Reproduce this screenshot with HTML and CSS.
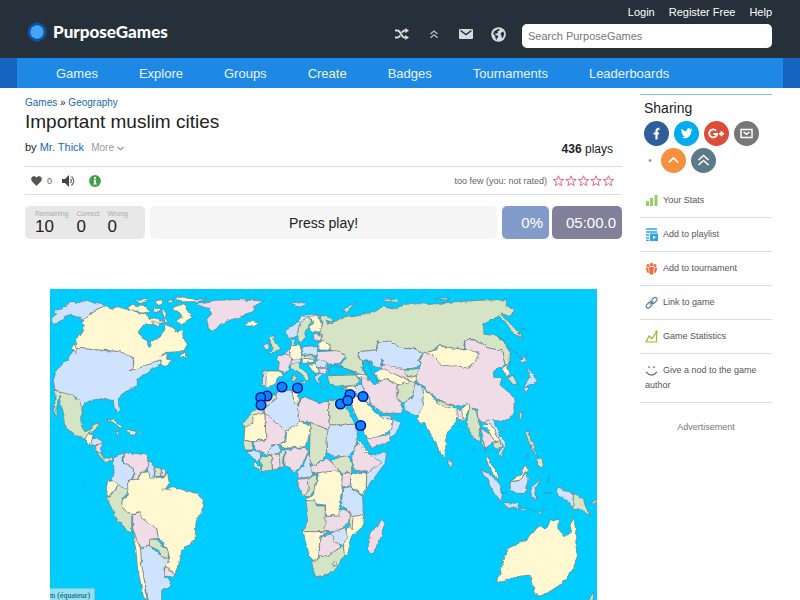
FILE: index.html
```html
<!DOCTYPE html>
<html lang="en">
<head>
<meta charset="utf-8">
<title>Important muslim cities - PurposeGames</title>
<link rel="stylesheet" href="styles.css">
</head>
<body>
<header class="top">
  <a class="logo" href="#"><svg width="20" height="20" viewBox="0 0 20 20" aria-hidden="true"><circle cx="10" cy="10" r="9.5" fill="#0d52a0"/><circle cx="10" cy="10" r="6.7" fill="#42a5f5"/></svg><span>PurposeGames</span></a>
  <nav class="tools">
    <a href="#" aria-label="Random game"><svg width="14" height="12" viewBox="0 0 14 12"><path d="M0 2.5h2.5C6 2.5 6 9.5 9.5 9.5H11M0 9.5h2.5c1.300 0 2-.9 2.600-2M7 4.600c.6-1.200 1.300-2.100 2.500-2.100H11" fill="none" stroke="#d8dadd" stroke-width="1.900"/><path d="M10.300 0 14 2.500 10.300 5.200zM10.300 6.900 14 9.500 10.300 12z" fill="#d8dadd"/></svg></a>
    <a href="#" aria-label="Boost"><svg width="10" height="10" viewBox="0 0 10 10"><path d="m1.500 5 3.500-3 3.500 3M1.500 8.800 5 5.800l3.500 3" fill="none" stroke="#b9bec3" stroke-width="1.300"/></svg></a>
    <a href="#" aria-label="Messages"><svg width="14" height="10" viewBox="0 0 14 10"><rect width="14" height="10" rx="1" fill="#d8dadd"/><path d="m1.500 1.500 5.500 4 5.500-4" fill="none" stroke="#25303b" stroke-width="1.500"/></svg></a>
    <a href="#" aria-label="Language"><svg width="15" height="15" viewBox="0 0 15 15"><circle cx="7.500" cy="7.500" r="7.300" fill="#d8dadd"/><path d="M6.500 2.200 8.800 2l-.6 1.500-1.700 1.100.5 1.200-2 .9L3.800 6.500l.7 1.500 2.200.5.7 1.500-1.400 1.200-.4 1.800-1.100-1.800-.3-1.900L2.200 6.800l.8-2.300zM10.700 5.200l1.700-.6.8 2.600-1.200 3.400-1.300.3-.2-2.200-1.200-1.700z" fill="#25303b"/></svg></a>
  </nav>
  <div class="account">
    <nav class="userlinks"><a href="#">Login</a><a href="#">Register Free</a><a href="#">Help</a></nav>
    <input class="search" type="text" placeholder="Search PurposeGames" aria-label="Search PurposeGames">
  </div>
</header>
<div class="navbar">
  <nav class="mainnav"><a href="#">Games</a><a href="#">Explore</a><a href="#">Groups</a><a class="create" href="#">Create</a><a href="#">Badges</a><a href="#">Tournaments</a><a href="#">Leaderboards</a></nav>
</div>
<div class="page">
<main class="game">
  <nav class="crumbs"><a href="#">Games</a> » <a href="#">Geography</a></nav>
  <h1>Important muslim cities</h1>
  <div class="byline">
    <div>by <a href="#">Mr. Thick</a> <button class="more" type="button">More <svg width="7" height="5" viewBox="0 0 7 5"><path d="m.5 1 3 2.800 3-2.800" fill="none" stroke="#999" stroke-width="1.200"/></svg></button></div>
    <div class="plays"><b>436</b> plays</div>
  </div>
  <div class="toolbar">
    <button type="button" aria-label="Favourite"><svg width="11" height="10" viewBox="0 0 11 10"><path d="M5.500 10 .9 5.300C-.5 3.500.2.500 2.700.300 4 .200 5 .900 5.500 1.700 6 .900 7 .200 8.300.300c2.500.2 3.200 3.200 1.800 5z" fill="#555"/></svg></button><span class="favs">0</span>
    <button class="sound" type="button" aria-label="Sound"><svg width="13" height="12" viewBox="0 0 13 12"><path d="M0 4h3l4-4v12L3 8H0z" fill="#444"/><path d="M8.500 3.800q1.600 2.200 0 4.400M9.500 1.500q4.500 4.500 0 9" fill="none" stroke="#666" stroke-width="1.200"/></svg></button>
    <button class="info" type="button" aria-label="Information"><svg width="12" height="12" viewBox="0 0 12 12"><circle cx="6" cy="6" r="5.900" fill="#43a047"/><path d="M5 2h2v1.800H5zM4.500 4.800H7v3.700h.7v1H4.400v-1h.8V5.800h-.7z" fill="#fff"/></svg></button>
    <span class="rating">too few (you: not rated)</span>
    <svg class="stars" width="62" height="12" viewBox="0 0 62 12" role="img" aria-label="Not rated"><defs><path id="star" d="m5.500.8 1.400 3.500 3.800.2-3 2.400 1 3.700-3.200-2-3.200 2 1-3.700-3-2.400 3.800-.2z" fill="none" stroke="#e8596b" stroke-width=".9"/></defs><use href="#star"/><use href="#star" x="12.500"/><use href="#star" x="25"/><use href="#star" x="37.500"/><use href="#star" x="50"/></svg>
  </div>
  <div class="scorebar">
    <dl class="counts"><div><dt>Remaining</dt><dd>10</dd></div><div><dt>Correct</dt><dd>0</dd></div><div><dt>Wrong</dt><dd>0</dd></div></dl>
    <button class="prompt" type="button">Press play!</button>
    <div class="results"><div class="percent">0%</div><div class="timer">05:00.0</div></div>
  </div>
  <svg class="map" viewBox="0 0 547 311" role="img" aria-label="World map">
    <defs><filter id="coast" x="0" y="0" width="100%" height="100%" color-interpolation-filters="sRGB"><feTurbulence type="fractalNoise" baseFrequency=".16" numOctaves="2" seed="4"/><feDisplacementMap in="SourceGraphic" scale="4" xChannelSelector="R" yChannelSelector="G"/></filter></defs>
    <rect width="547" height="311" fill="#0cf"/>
    <g filter="url(#coast)">
    <rect width="547" height="311" fill="#0cf"/>
    <g class="land" transform="translate(0 -4) scale(.33333)">
      <path class="b" d="M5 112V100L20 87 10 82 18 75 35 72 50 65 45 58 65 50 85 53 110 46 135 55 162 60 98 105 85 98 60 90 45 95 50 100 30 108 12 115Z"/>
      <path class="y" d="M162 60 185 70 205 65 235 75 265 82 290 90 300 105 320 100 345 110 335 75 350 82 345 100 355 112 330 112 320 118 280 120 265 140 270 155 292 168 295 188 302 185 305 168 325 160 340 140 345 122 370 122 375 140 395 135 400 155 412 178 405 195 385 200 350 202 335 210 330 215 345 208 355 210 352 222 370 228 350 240 335 240 330 225 305 235 270 248 240 257 252 235 250 222 240 215 210 200 80 190 75 180 82 160 100 135 103 120 95 112 98 105Z"/>
      <path class="b" d="M80 190 210 200 240 213 250 222V245L240 257 270 248 305 235 328 225 332 238 310 250 295 262 275 272 262 285V300L245 310 215 328 205 345 208 375 200 383 193 370 190 347 160 340 120 347 105 355 98 375 88 350 75 335 45 330 35 320 15 315 10 285 20 255 60 215 72 195Z"/>
      <path class="g" d="M15 315 35 322 72 332 78 345 88 345 100 375 92 400 95 425 105 440 122 435 128 420 148 415 140 435 118 443 105 462 75 452 50 430 38 405 42 390 30 350 28 328 24 345 20 370 22 398 14 385 15 345Z"/>
      <path class="y" d="M106 460 115 445H125L128 462 120 478 108 474Z"/><path class="b" d="M128 460 158 465 155 477 135 482 120 476Z"/><path class="p" d="M135 482 158 475 152 505 140 500Z"/><path class="g" d="M140 500 152 505 162 520 185 515 190 527 180 523 168 532 150 515Z"/>
      <path class="y" d="M232 68 245 60 262 65 270 60 295 63 292 72 300 80 280 84 262 78 245 78ZM252 45 280 42 292 48 275 53ZM315 48 335 44 340 54 325 58ZM350 48 368 44 362 54ZM370 40 400 36 425 42 470 42 440 50 400 50ZM368 68 395 58 410 68 415 82 430 98 408 108 395 120 378 106 398 96 388 82 372 80ZM310 72 330 70 325 82 312 80ZM302 112 330 110 325 125ZM387 215 405 198 412 220ZM168 405 190 404 220 425 212 430 190 412ZM232 435 258 440 250 447 230 443ZM196 440H208L203 446ZM262 440H275L270 445ZM68 178 80 182 78 203 68 190Z"/>
      <path class="p" d="M440 55 500 46 570 44 640 48 610 65 615 75 570 97 540 105 515 115 490 138 475 130 470 105 485 90 480 70 455 65Z"/>
    </g>
    <g class="land" transform="translate(190 -4) scale(.33333)">
      <path class="y" d="M18 115 35 108 57 115 40 125 20 122Z"/>
      <path class="g" d="M90 155 103 152 102 165 118 190 112 200 88 204 100 190 92 178Z"/><path class="b" d="M70 180 85 175 88 190 72 195ZM155 55 180 50 200 58 180 66Z"/>
      <path class="g" d="M245 90 275 100 280 112 255 105 262 118 320 95 385 85 430 65 455 72 510 55 570 58 650 50 740 45 800 45 798 65 820 72 815 90 780 88 810 115 850 158 820 145 795 110 775 92 765 100 730 118 732 148 765 152 795 175 810 200V235L795 240 785 198 745 188 700 163 675 165 670 190 640 190 595 180 585 195 550 205 520 190H480L455 170H410V195L355 200V220L370 228 365 245 375 275 350 262 315 250 300 235 318 225V210L290 200 270 195V178L245 165 243 145 235 145 245 120ZM310 75 325 62 355 55 330 68 320 80ZM425 42 475 45 470 52 440 49ZM588 40 630 38 615 45Z"/>
      <path class="b" d="M137 135 165 118 185 95 215 88 245 92 235 100 200 97 180 115 170 155 150 160 138 150Z"/><path class="g" d="M180 112 200 97 215 105 205 125 195 140V155L180 172 170 155Z"/><path class="y" d="M210 95 235 90 245 125 240 140 215 142 210 125 218 110Z"/>
      <path class="p" d="M107 220 135 203 150 215 155 230 145 245 150 255 135 262 115 255 118 235Z"/><path class="y" d="M150 185 180 180 188 210 182 222H150L147 200Z"/><path class="b" d="M155 165 165 162 165 180 155 182ZM185 185 228 182 232 205 220 212 190 205ZM137 205 148 190 150 212Z"/>
      <path class="y" d="M68 258 120 258 130 270 112 282 108 295 85 308 70 303Z"/><path class="b" d="M68 262 80 265 77 302 67 300Z"/><path class="g" d="M148 235 180 230 178 245 205 268 210 280 200 285 180 265 155 250ZM178 288 198 288 195 297ZM158 272H166V288H158Z"/>
      <path class="p" d="M232 200 290 197 318 212 300 232 280 240 262 232 230 225ZM220 150 243 148 245 168 222 165Z"/><path class="y" d="M235 175 255 165 272 185 262 195H232ZM185 225 225 218 222 232 190 235ZM205 240 228 235 238 262 222 265Z"/><path class="g" d="M185 210 220 214 228 222 185 224Z"/><path class="b" d="M232 225 260 228 262 248H235L225 235ZM222 270 250 268 238 280 240 298 228 287ZM152 225 183 222 182 232 155 238Z"/><path class="p" d="M235 250H262L255 268H238Z"/>
      <path class="g" d="M262 273 300 270 345 268 358 285 350 300 300 305 270 300ZM305 312 322 307 318 314ZM240 306H260L255 310Z"/>
      <path class="y" d="M340 265 375 270 385 285 365 282ZM320 305 352 300 345 325 322 330Z"/>
      <path class="b" d="M355 200 410 195V172L455 168 480 190 520 192 550 205 535 225 545 240 500 250 470 265 430 235 425 250 400 240 392 228 370 228 355 220Z"/>
      <path class="p" d="M425 238 480 252 515 260 500 285 470 270 430 255Z"/><path class="y" d="M405 262 430 250 470 270 510 290 480 302 440 282 415 285Z"/><path class="g" d="M495 255 545 250 540 265 520 275 495 268Z"/><path class="y" d="M500 272 530 275 525 295 505 288Z"/>
      <path class="p" d="M365 275 380 285 415 295 430 282 475 298 470 330 490 375V385L430 385 400 365 380 330 365 300Z"/><path class="g" d="M475 300 515 288 530 300 520 330 495 352 470 345Z"/><path class="b" d="M497 375 490 355 520 335 528 300 545 300 550 345 540 400 520 390Z"/>
      <path class="b" d="M350 300 365 298 380 330 395 355 375 350 345 325Z"/><path class="y" d="M325 345 345 330 385 355 405 380 420 395 460 405 455 435 410 458 380 462 360 415 345 385Z"/><path class="b" d="M460 400 482 415 465 450 445 458 455 430ZM420 392 452 392 455 402 425 400Z"/><path class="p" d="M380 462 412 455 445 448 452 468 392 490Z"/>
      <path class="sea" d="M368 232 388 230 390 250 405 275 418 298 400 298 385 275 370 250ZM262 252 275 243 300 242 340 262 345 270 300 271 275 268ZM424 225 430 225 428 245 422 240Z"/>
      <path class="g" d="M55 365 75 345 90 330 108 330 105 345 72 372ZM10 415 45 372H72V390H40V415L15 430Z"/><path class="y" d="M15 425 38 418 40 390 75 385 78 462 35 470 12 465Z"/><path class="b" d="M72 372 105 345 110 320 158 315 160 340 175 370 180 412 140 440 75 390Z"/><path class="y" d="M158 305 175 310 172 335 180 345 170 360 158 335Z"/>
      <path class="p" d="M75 385 140 438 130 470 100 480 85 510 45 490 38 470 78 465Z"/><path class="y" d="M140 438 180 412 212 420 208 450 195 485 130 490 120 478 138 465Z"/><path class="p" d="M180 345 195 335 240 355 265 345 268 435 210 412H180L172 370Z"/><path class="g" d="M265 345 320 352 318 368 325 375 345 418 268 420ZM212 412 265 435 258 475 260 510 220 545 208 520 210 450Z"/><path class="b" d="M268 420 345 418 355 450 345 490 325 515H285L260 500 258 465Z"/>
      <path class="g" d="M588 352 605 345 640 365 635 375 600 365Z"/>
      <path class="p" d="M675 165 705 165 745 188 785 198 795 240 772 250 760 260 762 280 785 280 780 300 810 325 825 345V385L790 410 760 405 735 410 715 405 710 375 685 360 650 362 620 355 575 330 555 305 535 295 525 280 545 240 540 225 555 200 585 215 610 245 650 240 690 250 715 205 675 190Z"/>
      <path class="y" d="M555 203 590 195 595 182 640 190 670 192 695 195 715 208 705 230 685 250 650 242 610 245 585 215ZM545 305 570 325 590 350 640 370 660 375 685 355 690 365 670 410 650 395 648 410 620 445 618 475 615 520 600 505 585 465 560 430 555 410 540 415 530 400 545 370 550 340Z"/><path class="g" d="M590 345 640 362V372L595 358Z"/><path class="p" d="M648 378 665 375 670 410 655 400Z"/>
      <path class="y" d="M785 250 800 240 810 265 800 275Z"/><path class="g" d="M800 275 820 272 832 298 818 298ZM690 360 710 385 715 405 722 430 715 450 725 475 738 500 730 470 705 462 695 450 682 425V400Z"/><path class="b" d="M860 250 878 265 890 290 870 300 850 305 860 290 872 280ZM840 225 855 215 865 230 845 235ZM850 310 868 305 858 325Z"/>
      <path class="p" d="M722 430 745 445 768 465 750 480 735 490 730 465Z"/><path class="b" d="M735 408 760 402 765 420 780 450 798 480 780 515 775 505 788 485 772 450 750 420Z"/><path class="y" d="M730 420 750 415 775 455 782 475 765 470 750 445Z"/><path class="g" d="M758 475 782 470 785 485 770 497ZM838 385 845 380V400L840 405ZM858 440 868 440 870 470 885 480 880 490 862 468ZM783 430 792 428 790 440Z"/>
      <path class="line" d="M765 152 790 165 812 190 830 205M865 200 858 218M835 210 845 220M835 130 855 132"/>
    </g>
    <g class="land" transform="translate(0 151) scale(.33333)">
      <path class="b" d="M190 55 220 38 215 65 250 85V115L232 118 235 150 215 148 185 125 192 100Z"/><path class="p" d="M220 40 240 38 290 45 297 60 290 90 268 98 265 120 252 120 250 85 222 70Z"/><path class="b" d="M297 60 315 85 312 110 318 118 300 115 292 90Z"/><path class="g" d="M315 82 335 85 332 108 315 110Z"/><path class="p" d="M335 85 348 95 340 110 333 108Z"/>
      <path class="y" d="M232 120 268 118 270 98 292 92 302 115 345 110 352 95 358 130 345 148 370 140 400 150 440 160 460 180 455 215 438 245 435 300 395 330 390 365 375 400 345 382 358 350 350 325 325 295 320 265 270 235 265 215 240 225 215 205V185L235 165ZM172 125 190 122 202 135 178 172 168 160Z"/>
      <path class="g" d="M168 170 178 172 205 135 235 150 215 185 218 205 245 225V278L205 245Z"/><path class="p" d="M248 225 268 215 275 235 320 265 325 295 300 298 298 315 272 322 258 295 248 265Z"/><path class="y" d="M246 275 258 300 272 325 275 370 285 430 292 485 280 470 262 380 258 330Z"/><path class="b" d="M272 325 298 315 335 350 358 350 345 385V410L362 425 355 445 335 450V485H295L288 440 275 375Z"/><path class="g" d="M300 298 320 298 355 335V355L335 350 325 330 298 318Z"/><path class="p" d="M347 382 375 400 370 412 345 408Z"/>
      <path class="line" d="M98 129 102 137M335 147 365 150"/>
    </g>
    <g class="land" transform="translate(190 151) scale(.33333)">
      <path class="g" d="M8 0 35 5 40 30H15ZM62 50 95 45 97 90 65 95ZM117 40 133 30 130 85H118Z"/><path class="b" d="M20 35 60 32 62 55 50 65 35 50ZM82 38 110 10 125 30 95 48Z"/><path class="y" d="M45 65 65 90 60 94 40 72Z"/><path class="p" d="M95 45 118 42 120 85 98 90ZM135 30 195 22 205 35 185 75 165 95 135 80Z"/><path class="b" d="M205 40 212 60 215 110 175 115 172 95 190 75Z"/>
      <path class="p" d="M215 80 260 55 285 75 300 95 235 98 212 100ZM345 20 360 10 390 45 425 65 400 95H375L345 90 335 70Z"/><path class="y" d="M348-5 365 10 388 38 380 38 358 15Z"/><path class="g" d="M272 60 325 45 335 75V98H310L285 80Z"/><path class="b" d="M390 45 440 38 435 70 380 145V100L425 68Z"/>
      <path class="y" d="M235 98 300 92 308 130 302 170 300 230 260 225 255 195 220 190 195 178 220 165 230 130Z"/><path class="p" d="M175 118 205 115 208 150 192 168 175 140ZM308 100 335 98 330 138H305Z"/><path class="g" d="M205 115 232 100 225 150 205 170 192 168 208 150ZM198 182 225 182 230 198H255L258 275H192L205 235Z"/><path class="y" d="M335 98 380 98 378 145 370 165 332 140Z"/><path class="b" d="M308 145 330 140 368 170 370 225 335 230 305 195Z"/>
      <path class="p" d="M255 230 300 228V205L330 215 325 250 290 275H255Z"/><path class="y" d="M335 230 370 225 368 260 335 290 325 335 310 350 312 310 320 265 338 250ZM190 275H270L240 285 235 362 215 365 200 320Z"/><path class="g" d="M328 210 338 235 337 270 328 250Z"/><path class="p" d="M240 290 272 282 300 320 262 348 238 345Z"/><path class="b" d="M272 280 315 262 322 290 308 318 285 305Z"/><path class="g" d="M215 365 235 360 240 345 262 348 308 318 315 345 290 380 265 405 225 410ZM275 372 285 364 291 372 282 381Z"/><path class="p" d="M425 238 435 250 420 300 400 340 385 335V305L390 280 410 265Z"/>
    </g>
    <g class="land" transform="translate(360 151) scale(.33333)">
      <path class="g" d="M115 55 130 70 120 80 114 70ZM490 160 520 175 525 195 540 228 515 210 488 208ZM378 60 395 52 400 75 390 82ZM362 15 375 18 372 32 385 50 374 43Z"/><path class="y" d="M230 45 245 75 262 95 268 120 255 110 240 85 228 60Z"/><path class="b" d="M212 90 235 95 265 130 278 160 272 185 255 165 240 130ZM278 188 320 190 328 205 290 200ZM300 125 330 122 348 95 355 115 345 160H320L302 150ZM362 150 375 130 395 122 375 145 380 175 365 172ZM440 145 455 142 460 155 490 160 488 205 470 180 445 165ZM330 204 350 207 342 212ZM385 220 405 208 390 224Z"/><path class="y" d="M300 125 330 105 345 75 355 90 340 95 332 120ZM258 425 270 400 285 350 295 325 345 300 365 280 390 260 410 265 420 240 445 240 443 265 465 290 480 280 485 250 492 235 500 290 502 345 490 390 450 435 410 460 390 468 370 460 375 440 365 430 360 405 320 410 280 425Z"/>
      <path class="g" d="M538 188 552 184 560 178V186L548 192ZM528 480 540 474 550 455V480Z"/><path class="line" d="M348 57 356 39M190 20 192 32M416 110 414 138M400 158 428 160M355 208 380 212M430 200 440 196M278 155 288 160"/>
    </g>
    </g>
    <rect x="-1" y="299" width="46" height="13" fill="#8ce3f5" stroke="#54afc4"/><text class="maplabel" x="-1" y="309">m (équateur)</text>
    <g class="pins"><circle cx="217" cy="107" r="4.800"/><circle cx="210.700" cy="108.500" r="4.800"/><circle cx="211" cy="116" r="4.800"/><circle cx="232" cy="98" r="4.800"/><circle cx="247.500" cy="99" r="4.800"/><circle cx="300" cy="105.500" r="4.800"/><circle cx="290.500" cy="115" r="4.800"/><circle cx="297.700" cy="111.500" r="4.800"/><circle cx="313" cy="107.500" r="4.800"/><circle cx="310.700" cy="136.500" r="4.800"/></g>
  </svg>
</main>
<aside class="side">
  <h2>Sharing</h2>
  <div class="share">
    <a class="facebook" href="#" aria-label="Facebook"><svg viewBox="0 0 25 25"><path d="M12.500 18.500v-8c0-2 .8-2.800 3-2.600M9.500 12.500h5.500" fill="none" stroke="#fff" stroke-width="2.200"/></svg></a>
    <a class="twitter" href="#" aria-label="Twitter"><svg viewBox="0 0 25 25"><path d="M18.500 9q-.7.700-1.300.9c.2 5.500-5 9-9.800 6.400 1.500.1 2.600-.3 3.400-1-1.200-.1-2-.8-2.300-1.700h1C8 13 7.300 12 7.300 10.900l1 .3C7.200 10.200 7 9 7.600 7.800c1.400 1.500 2.900 2.400 4.900 2.600-.4-2.800 2.400-3.900 4-2.300l1.500-.6-.9 1.400z" fill="#fff"/></svg></a>
    <a class="google" href="#" aria-label="Google Plus"><svg viewBox="0 0 25 25"><path d="M12.200 9.700A4 4 0 1 0 13.200 13H9.500M17.500 10.300v5M15 12.800h5" fill="none" stroke="#fff" stroke-width="1.900"/></svg></a>
    <a class="mail" href="#" aria-label="Email"><svg viewBox="0 0 25 25"><path d="M7 8.500h11v8H7zM9.500 11l3 2.200 3-2.200" fill="none" stroke="#fff" stroke-width="1.500"/></svg></a>
    <span class="dot">•</span>
    <a class="up" href="#" aria-label="Bump"><svg viewBox="0 0 25 25"><path d="m7.800 14.500 4.700-4.500 4.700 4.500" fill="none" stroke="#fff" stroke-width="1.700"/></svg></a>
    <a class="upup" href="#" aria-label="Super bump"><svg viewBox="0 0 25 25"><path d="m7.500 12 5-4.500 5 4.500m-10 5 5-4.500 5 4.500" fill="none" stroke="#fff" stroke-width="1.600"/></svg></a>
  </div>
  <ul class="actions">
    <li><a href="#"><svg viewBox="0 0 13 13"><path d="M1 7h3v5H1zM5 4h3v8H5zM9.500 1h3v11h-3z" fill="#9ccc65"/></svg>Your Stats</a></li>
    <li><a href="#"><svg viewBox="0 0 13 13"><path d="M1 1h11M1 4h11M1 7h3M1 10h3M1 12.500h3" stroke="#29a9ea" stroke-width="1.300"/><path d="M5 5.500h8V13H5z" fill="#29a9ea"/><path d="m8 7.500 3 1.800-3 1.700z" fill="#fff"/></svg>Add to playlist</a></li>
    <li><a href="#"><svg viewBox="0 0 13 13"><g fill="#f26b3f"><circle cx="3" cy="3.500" r="1.500"/><circle cx="6.500" cy="2.500" r="1.700"/><circle cx="10" cy="3.500" r="1.500"/><path d="M.8 5.500h2.500l.7 5.500-2-.5zM4 5h5l-.8 7.500H4.800zM9.800 5.500h2.500L11 10.500l-2 .5z"/></g></svg>Add to tournament</a></li>
    <li><a href="#"><svg viewBox="0 0 13 13"><g fill="none" stroke="#607d94" stroke-width="1.200"><rect x="5.500" y="2.500" width="7" height="4" rx="2" transform="rotate(-45 9 4.500)"/><rect x=".8" y="7" width="7" height="4" rx="2" transform="rotate(-45 4.300 9)"/><path d="m4.800 8.500 3.700-3.700"/></g></svg>Link to game</a></li>
    <li><a href="#"><svg viewBox="0 0 13 13"><path d="M1 12h11.500M1.500 11 4 6l3 2.500L11.500 2M11.500 2v9M1 12l1-2.500" fill="none" stroke="#a4b42b" stroke-width="1.200"/><circle cx="11.500" cy="1.800" r="1.200" fill="#a4b42b"/></svg>Game Statistics</a></li>
    <li><a href="#"><svg viewBox="0 0 13 13"><path d="M3 3.200h2M8 3.200h2M1 8q5.500 6 11 0" fill="none" stroke="#607d8b" stroke-width="1.300"/></svg>Give a nod to the game author</a></li>
  </ul>
  <p class="ad">Advertisement</p>
</aside>
</div>
</body>
</html>
```
FILE: styles.css
```css
* { box-sizing: border-box; }
body { margin: 0; font-family: "Liberation Sans", Arial, sans-serif; font-size: 10px; color: #222; background: #fff; }
a { color: #1769bd; text-decoration: none; }
button { padding: 0; border: 0; background: none; font: inherit; color: inherit; cursor: pointer; }
h1, h2, p, ul, dl, dd { margin: 0; padding: 0; font-weight: normal; }
svg { flex: none; }

.top { display: flex; height: 58px; padding: 4px 28px 0 27px; background: #25303b; }
.logo { display: flex; align-items: center; gap: 6px; height: 56px; margin-right: auto; color: #fff; }
.logo span { font-family: Lato, "Liberation Sans", sans-serif; font-size: 17px; font-weight: 900; line-height: 24px; }
.tools { display: flex; align-items: center; gap: 18px; height: 60px; margin-right: 16px; }
.tools a { display: flex; min-width: 14px; justify-content: center; }
.account { width: 250px; }
.userlinks { display: flex; justify-content: flex-end; gap: 14px; line-height: 16px; font-size: 11px; }
.userlinks a { color: #fff; }
.search { display: block; width: 100%; height: 24px; margin-top: 4px; padding: 0 6px; border: 0; border-radius: 5px; background: #fff; font: 11px "Liberation Sans", sans-serif; }
.search::placeholder { color: #777; }

.navbar { padding: 0 17px; background: #1565c0; }
.mainnav { display: flex; gap: 41px; height: 30px; padding-left: 39px; background: #1e88e5; font-size: 13px; line-height: 31px; }
.mainnav a { color: #e9f4ff; }
.mainnav .create { color: #f0f4c3; }

.page { display: grid; grid-template-columns: minmax(0, 1fr) 132px; column-gap: 18px; padding: 6px 28px 0 25px; }
.crumbs { padding-top: 2px; line-height: 14px; }
h1 { font-size: 19px; line-height: 24px; }
.byline { display: flex; justify-content: space-between; height: 33px; padding: 5px 9px 0 0; font-size: 11px; line-height: 16px; }
.more { margin-left: 4px; color: #999; font-size: 10px; }
.plays { font-size: 12px; line-height: 20px; }
.toolbar { display: flex; align-items: center; height: 29px; margin-top: -1px; padding: 0 7px 0 6px; border-top: 1px solid #ddd; border-bottom: 1px solid #ddd; color: #666; font-size: 9px; }
.toolbar svg, .share svg { display: block; }
.favs { margin-left: 5px; }
.sound { margin-left: 10px; }
.info { margin-left: 14px; }
.rating { margin-left: auto; margin-right: 6px; }

.scorebar { display: flex; gap: 5px; height: 33px; margin-top: 11px; }
.counts { display: flex; gap: 8px; width: 120px; padding: 4px 0 0 10px; border-radius: 5px; background: #e8e8e8; }
.counts dt { color: #aaa; font-size: 7px; line-height: 8px; }
.counts dd { font-size: 17px; line-height: 18px; }
.prompt { flex: 1; border-radius: 5px; background: #f5f5f5; font-size: 14px; }
.results { display: flex; gap: 3px; }
.percent, .timer { padding-right: 6px; border-radius: 5px; color: #fff; font-size: 15px; line-height: 34px; text-align: right; }
.percent { width: 47px; background: #839bca; }
.timer { width: 70px; background: #83809c; }

.map { display: block; width: calc(100% - 50px); margin: 50px 25px 0; }
.land path { stroke: #72777a; stroke-width: 2; stroke-linejoin: round; }
.land .y { fill: #fff8d0; }
.land .b { fill: #cfe3ff; }
.land .p { fill: #efdce6; }
.land .g { fill: #d5e4c4; }
.land .sea { fill: #0cf; }
.land .line { fill: none; }
.pins circle { fill: #0c86fa; stroke: #00129a; stroke-width: 1.500; }
.maplabel { font: 8px "Liberation Serif", serif; fill: #245; }

.side { border-top: 1px solid #7cc4e4; }
h2 { padding: 4px 4px 0; font-size: 14px; line-height: 18px; }
.share { display: flex; flex-wrap: wrap; gap: 2px 5px; padding: 4px 4px 0; }
.share a { width: 25px; height: 25px; border-radius: 50%; }
.facebook { background: #2d609b; }
.twitter { background: #00acee; }
.google { background: #dd4b39; }
.mail { background: #777; }
.up { background: #f5903f; }
.upup { background: #5d7a89; }
.dot { width: 12px; color: #999; line-height: 25px; text-align: center; }
.actions { margin-top: 11px; list-style: none; font-size: 9px; }
.actions li { padding: 9px 5px; border-bottom: 1px solid #ddd; line-height: 15px; }
.actions a { color: #555; }
.actions svg { display: inline-block; width: 13px; height: 13px; margin-right: 5px; vertical-align: middle; }
.ad { margin-top: 17px; color: #777; font-size: 9px; line-height: 14px; text-align: center; }
```
